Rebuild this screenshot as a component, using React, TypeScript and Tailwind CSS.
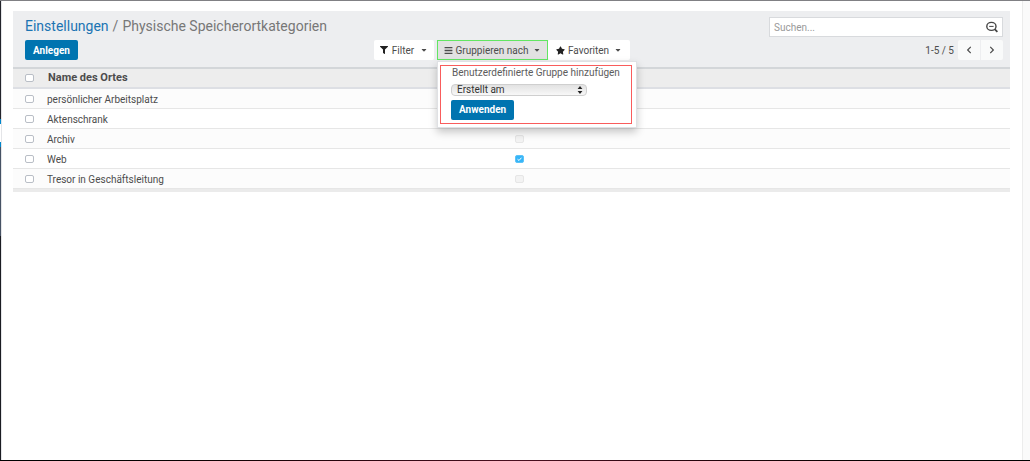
import { FaBars, FaCaretDown, FaChevronLeft, FaChevronRight, FaFilter, FaStar } from "react-icons/fa";

type Place = { name: string; flagged: boolean };

const places: Place[] = [
  { name: "persönlicher Arbeitsplatz", flagged: false },
  { name: "Aktenschrank", flagged: false },
  { name: "Archiv", flagged: false },
  { name: "Web", flagged: true },
  { name: "Tresor in Geschäftsleitung", flagged: false },
];

function RowCheckbox({ label }: { label: string }) {
  return (
    <input
      type="checkbox"
      aria-label={label}
      className="block h-2 w-[9px] appearance-none rounded-[2px] border border-[#b9bec6] bg-white checked:bg-[#3db8f5]"
    />
  );
}

function FlagCheckbox({ place }: { place: Place }) {
  return (
    <span className="relative block h-2 w-[9px]">
      <input
        type="checkbox"
        disabled
        defaultChecked={place.flagged}
        aria-label={`Markierung ${place.name}`}
        className="block h-2 w-[9px] appearance-none rounded-[2px] border border-[#e6e6e6] bg-[#f3f3f3] checked:border-[#5cc3f8] checked:bg-[#35b5f8]"
      />
      {place.flagged && (
        <svg viewBox="0 0 9 8" className="pointer-events-none absolute inset-0 h-2 w-[9px]" fill="none" stroke="white" strokeWidth="1">
          <path d="M2.5 4.2 4 5.5 6.5 2.7" />
        </svg>
      )}
    </span>
  );
}

function SearchIcon() {
  return (
    <svg viewBox="0 0 14 12" className="h-3 w-3.5" fill="none" stroke="#444" strokeWidth="1.4">
      <ellipse cx="6.4" cy="5.4" rx="4.6" ry="4" />
      <path d="M9.6 8.2 12.4 10.8" strokeWidth="1.8" />
      <path d="M4.2 5.4h4.4" strokeWidth="1" />
    </svg>
  );
}

function GroupMenu() {
  return (
    <div className="absolute left-0 top-full z-10 mt-px border border-[#dfe1e4] bg-white py-[3px] pl-0.5 pr-1 shadow-[0_4px_8px_rgba(0,0,0,0.22)]">
      <div className="flex h-[59px] w-48 flex-col items-start border border-[#f95c5c] pl-2.5">
        <label htmlFor="group-field" className="ml-px h-3.5 whitespace-nowrap text-[10px] leading-3.5 text-[#5c5c5c]">
          Benutzerdefinierte Gruppe hinzufügen
        </label>
        <span className="relative mt-1 block h-3 w-34">
          <select
            id="group-field"
            className="block h-3 w-full appearance-none rounded-[4px] border border-[#cfcfcf] bg-linear-to-b from-[#e2e2e2] to-[#f8f8f8] pl-[5px] text-[10px] leading-2.5 text-[#333]"
          >
            <option>Erstellt am</option>
          </select>
          <svg viewBox="0 0 6 8" className="pointer-events-none absolute right-1 top-0.5 h-2 w-1.5" fill="#222">
            <path d="M3 0 5.4 3H.6zM3 8 5.4 5H.6z" />
          </svg>
        </span>
        <button className="mt-1 h-5 rounded-[2px] bg-[#0074b0] px-2 text-[10px] font-bold leading-5 text-white">Anwenden</button>
      </div>
    </div>
  );
}

export default function App() {
  return (
    <div className="flex min-h-screen flex-col bg-white font-['Roboto',sans-serif] text-[10px] text-[#4c4c4c]">
      <div className="h-px bg-[#808084]" />
      <div className="flex grow">
        <div className="flex w-px shrink-0 flex-col">
          <div className="h-[118px] bg-[#23242b]" />
          <div className="h-[5px] bg-[#0087cc]" />
          <div className="h-[18px] bg-white" />
          <div className="h-[5px] bg-[#0087cc]" />
          <div className="h-[89px] bg-[#465264]" />
          <div className="grow bg-[#1b1c22]" />
        </div>
        <div className="w-px shrink-0 bg-[#e4e5e8]" />
        <main className="min-w-0 grow pl-[11px] pr-3 pt-2.5">
          <header className="h-14 bg-[#edeef0] pl-3 pr-[7px] pt-1.5">
            <div className="flex h-5 justify-between">
              <nav className="flex gap-1 text-[14px] leading-[18px] text-[#777]">
                <a href="#" className="text-[#1b74b3]">Einstellungen</a>
                <span>/</span>
                <span>Physische Speicherortkategorien</span>
              </nav>
              <div className="flex h-5 w-[234px] items-center justify-between border border-[#d8dadd] bg-white pl-1 pr-[3px]">
                <input aria-label="Suchen" placeholder="Suchen..." className="min-w-0 grow text-[10px] placeholder:text-[#999]" />
                <button aria-label="Suche starten">
                  <SearchIcon />
                </button>
              </div>
            </div>
            <div className="mt-[3px] grid h-5 grid-cols-[349px_1fr_auto] items-center">
              <button className="h-5 justify-self-start rounded-[2px] bg-[#0074b0] px-2 text-[10px] font-bold text-white">Anlegen</button>
              <div className="flex h-5 text-[10px]">
                <button className="flex w-15 items-center justify-center gap-1 rounded-[2px] bg-white">
                  <FaFilter className="size-2 text-[#222]" />
                  Filter
                  <FaCaretDown className="ml-0.5 size-2" />
                </button>
                <div className="relative ml-[3px]">
                  <button className="flex h-5 w-[111px] items-center justify-center gap-[3px] border border-[#62e662] bg-[#e2e2e2]">
                    <FaBars className="size-[9px]" />
                    Gruppieren nach
                    <FaCaretDown className="ml-0.5 size-2" />
                  </button>
                  <GroupMenu />
                </div>
                <button className="flex w-[82px] items-center justify-center gap-[3px] rounded-[2px] bg-white">
                  <FaStar className="size-[9px] text-[#222]" />
                  Favoriten
                  <FaCaretDown className="ml-0.5 size-2" />
                </button>
              </div>
              <div className="flex items-center">
                <span className="mr-1">1-5 / 5</span>
                <button aria-label="Zurück" className="flex h-5 w-[22px] items-center justify-center rounded-l-[2px] bg-[#f9fafa]">
                  <FaChevronLeft className="size-2" />
                </button>
                <button aria-label="Weiter" className="ml-px flex h-5 w-[22px] items-center justify-center rounded-r-[2px] bg-[#f9fafa]">
                  <FaChevronRight className="size-2" />
                </button>
              </div>
            </div>
          </header>
          <table className="w-full table-fixed border-separate border-spacing-0 border-b-[3px] border-b-[#ebebeb] text-left">
            <thead>
              <tr className="h-[22px] bg-[#ededed]">
                <th className="w-8 border-y-2 border-b-[#dddfe4] border-t-[#d3d6d9] p-0 pl-3">
                  <RowCheckbox label="Alle auswählen" />
                </th>
                <th className="border-y-2 border-b-[#dddfe4] border-t-[#d3d6d9] p-0 pl-[3px] text-[11px] font-bold leading-4">Name des Ortes</th>
                <th className="w-[566px] border-y-2 border-b-[#dddfe4] border-t-[#d3d6d9] p-0" />
              </tr>
            </thead>
            <tbody>
              {places.map((place) => (
                <tr key={place.name} className="h-5 odd:bg-[#fcfcfc]">
                  <td className="border-b border-[#e6e6e6] p-0 pl-3">
                    <RowCheckbox label={place.name} />
                  </td>
                  <td className="border-b border-[#e6e6e6] p-0 pl-0.5 pt-[3px] leading-4">{place.name}</td>
                  <td className="border-b border-[#e6e6e6] p-0 pl-[71px]">
                    <FlagCheckbox place={place} />
                  </td>
                </tr>
              ))}
            </tbody>
          </table>
        </main>
        <div className="w-2 shrink-0 border-l border-[#ececec] bg-[#fafafa]" />
      </div>
      <div className="h-px bg-linear-to-r from-black via-[#4b1020] to-black" />
    </div>
  );
}
